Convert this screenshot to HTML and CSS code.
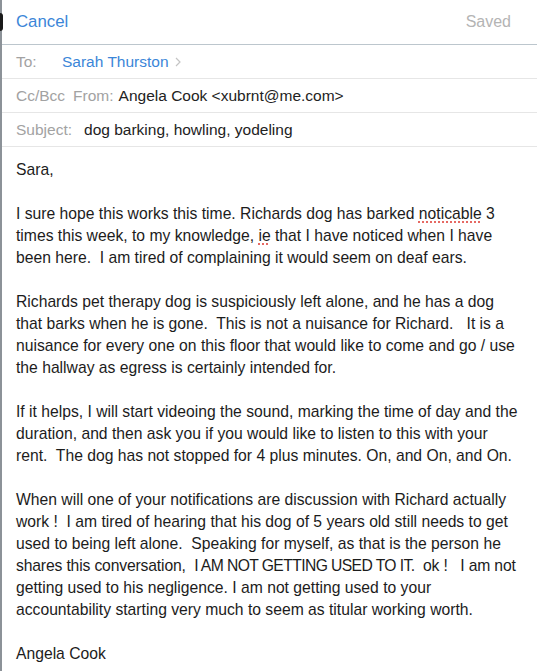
FILE: index.html
```html
<!DOCTYPE html>
<html>
  <head>
    <meta charset="UTF-8" />
    <title>Compose</title>
    <link rel="stylesheet" href="styles.css">
  </head>
  <body>
    <div class="edge"><span class="edge-mark"></span></div>
    <div class="compose">
      <div class="nav">
        <span class="cancel">Cancel</span>
        <span class="saved">Saved</span>
      </div>
      <div class="field">
        <span class="label label-to">To:</span>
        <span class="recipient">Sarah Thurston</span>
        <svg class="chevron" width="6" height="10" viewBox="0 0 6 10">
          <polyline points="1,1 5,5 1,9" fill="none" stroke="#c4c4c4" stroke-width="1.2" />
        </svg>
      </div>
      <div class="field">
        <span class="label">Cc/Bcc</span>
        <span class="label label-from">From:</span>
        <span class="value">Angela Cook &lt;xubrnt@me.com&gt;</span>
      </div>
      <div class="field">
        <span class="label label-subject">Subject:</span>
        <span class="value">dog barking, howling, yodeling</span>
      </div>
      <div class="body">
        <p>Sara,</p>
        <p>I sure hope this works this time. Richards dog has barked <span class="typo">noticable</span> 3<br>times this week, to my knowledge, <span class="typo">ie</span> that I have noticed when I have<br>been here.&nbsp; I am tired of complaining it would seem on deaf ears.</p>
        <p>Richards pet therapy dog is suspiciously left alone, and he has a dog<br>that barks when he is gone.&nbsp; This is not a nuisance for Richard.&nbsp;&nbsp; It is a<br>nuisance for every one on this floor that would like to come and go / use<br>the hallway as egress is certainly intended for.</p>
        <p>If it helps, I will start videoing the sound, marking the time of day and the<br>duration, and then ask you if you would like to listen to this with your<br>rent.&nbsp; The dog has not stopped for 4 plus minutes. On, and On, and On.</p>
        <p>When will one of your notifications are discussion with Richard actually<br>work !&nbsp; I am tired of hearing that his dog of 5 years old still needs to get<br>used to being left alone.&nbsp; Speaking for myself, as that is the person he<br><span class="tight">shares this conversation,&nbsp; <span class="caps">I AM NOT GETTING USED TO IT.</span>&nbsp; ok !&nbsp;&nbsp; I am not</span><br>getting used to his negligence. I am not getting used to your<br>accountability starting very much to seem as titular working worth.</p>
        <p>Angela Cook</p>
      </div>
    </div>
  </body>
</html>
```

FILE: styles.css
```css
/* Mail compose sheet */
body {
  font-family: "Liberation Sans", Arial, sans-serif;
  margin: 0;
  padding: 0;
  display: flex;
  height: 671px;
  overflow: hidden;
  background-color: white;
}
.edge {
  width: 2px;
  flex-shrink: 0;
  background-color: #8c9298;
  position: relative;
}
.edge-mark {
  position: absolute;
  left: 0;
  top: 13px;
  width: 3px;
  height: 18px;
  background-color: #1a1a1a;
  border-radius: 0 3px 3px 0;
}
.compose {
  flex: 1;
  min-width: 0;
}
.nav {
  height: 44px;
  display: flex;
  align-items: center;
  justify-content: space-between;
  padding: 0 26px 0 14px;
  border-bottom: 1px solid #bcc6cd;
  font-size: 16.8px;
}
.cancel {
  color: #3b86d8;
}
.saved {
  color: #b4b4b4;
  font-size: 16px;
}
.field {
  height: 33px;
  display: flex;
  align-items: center;
  padding-left: 14px;
  border-bottom: 1px solid #e6e6e6;
  font-size: 15.5px;
  white-space: nowrap;
}
.label {
  color: #a2a2a2;
}
.label-to {
  width: 46px;
}
.label-from {
  margin-left: 8px;
  margin-right: 5px;
}
.label-subject {
  margin-right: 12px;
}
.recipient {
  color: #3b86d8;
}
.chevron {
  margin-left: 6px;
}
.value {
  color: #222;
}
.body {
  padding: 12px 0 0 14px;
  font-size: 15.7px;
  line-height: 22px;
  color: #1c1c1c;
  white-space: nowrap;
}
.body p {
  margin: 0 0 22px;
}
.tight {
  letter-spacing: -0.15px;
}
.caps {
  letter-spacing: -0.6px;
}
.typo {
  text-decoration: underline dotted #e0413a;
  text-underline-offset: 3px;
}
```
